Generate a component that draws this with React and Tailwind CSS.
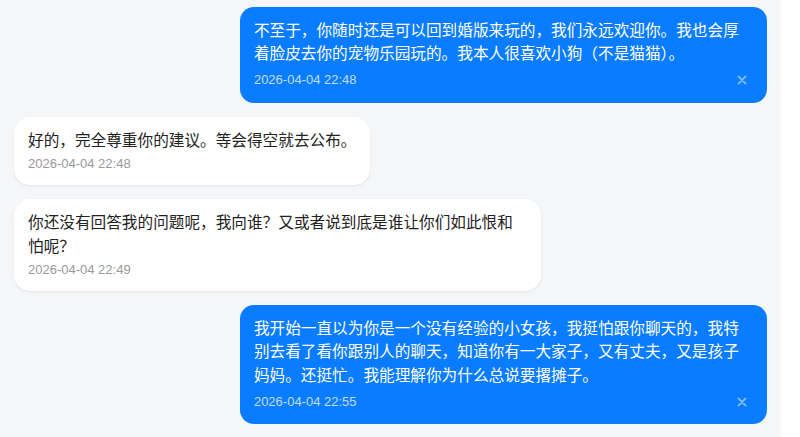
import React from 'react';

const messages = [
  {
    id: 1,
    mine: true,
    text: '不至于，你随时还是可以回到婚版来玩的，我们永远欢迎你。我也会厚着脸皮去你的宠物乐园玩的。我本人很喜欢小狗（不是猫猫）。',
    time: '2026-04-04 22:48',
  },
  {
    id: 2,
    mine: false,
    text: '好的，完全尊重你的建议。等会得空就去公布。',
    time: '2026-04-04 22:48',
  },
  {
    id: 3,
    mine: false,
    text: '你还没有回答我的问题呢，我向谁？又或者说到底是谁让你们如此恨和怕呢？',
    time: '2026-04-04 22:49',
  },
  {
    id: 4,
    mine: true,
    text: '我开始一直以为你是一个没有经验的小女孩，我挺怕跟你聊天的，我特别去看了看你跟别人的聊天，知道你有一大家子，又有丈夫，又是孩子妈妈。还挺忙。我能理解你为什么总说要撂摊子。',
    time: '2026-04-04 22:55',
  },
];

function Bubble({ msg }) {
  if (msg.mine) {
    return (
      <div className="flex justify-end">
        <div className="max-w-[70%] bg-[#0a7cff] text-white rounded-[14px] pt-3 pb-3 pl-[14px] pr-[14px]">
          <p className="text-[15.65px] leading-[23.4px] break-words">{msg.text}</p>
          <div className="mt-1 flex items-center justify-between h-[21px]">
            <span className="text-[13px] leading-[18px] text-white/75 font-['Liberation_Sans',sans-serif]">{msg.time}</span>
            <button className="w-[22px] h-[21px] flex items-center justify-center text-white/45">
              {/* delete */}
              <svg width="10" height="10" viewBox="0 0 10 10" fill="none" stroke="currentColor" strokeWidth="2" strokeLinecap="round">
                <path d="M1.5 1.5l7 7M8.5 1.5l-7 7" />
              </svg>
            </button>
          </div>
        </div>
      </div>
    );
  }
  return (
    <div className="flex justify-start">
      <div className="max-w-[70%] bg-white text-[#222] rounded-[16px] shadow-[0_1px_3px_rgba(0,0,0,0.08)] pt-3 pb-3 pl-[14px] pr-[14px]">
        <p className="text-[15.65px] leading-[23.4px] break-words">{msg.text}</p>
        <div className="mt-[3px] text-[13px] leading-[18px] text-[#999] font-['Liberation_Sans',sans-serif]">{msg.time}</div>
      </div>
    </div>
  );
}

export default function App() {
  return (
    <div className="flex h-[437px] w-[800px] overflow-hidden bg-white font-['Liberation_Sans','Noto_Sans_CJK_SC',sans-serif]">
      <div className="w-[781px] bg-[#f5f6f8] px-[14px] pt-[7px] flex flex-col gap-[14px]">
        {messages.map((m) => (
          <Bubble key={m.id} msg={m} />
        ))}
      </div>
      <div className="flex-1 bg-white" />
    </div>
  );
}
